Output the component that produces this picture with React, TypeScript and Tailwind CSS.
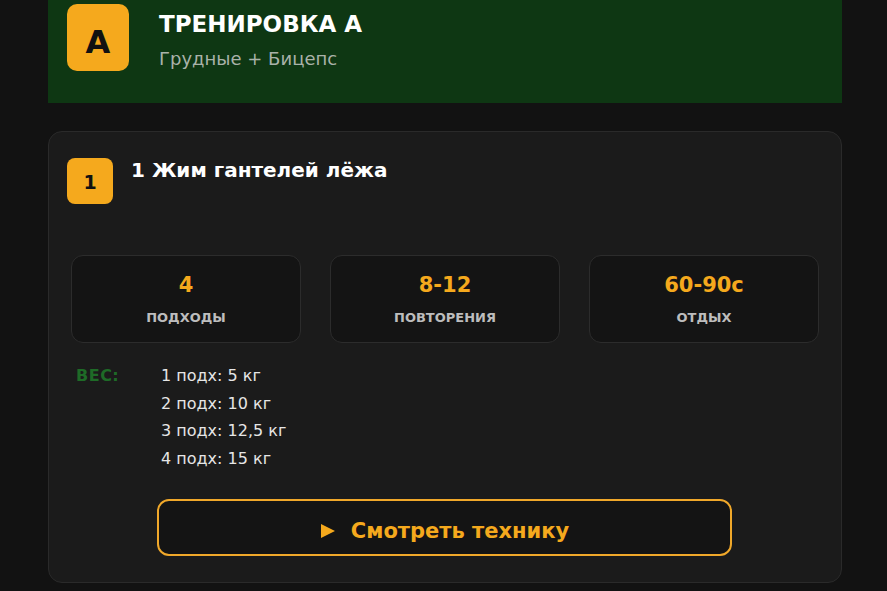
import React from "react";

const stats = [
  { value: "4", label: "ПОДХОДЫ" },
  { value: "8-12", label: "ПОВТОРЕНИЯ" },
  { value: "60-90с", label: "ОТДЫХ" },
];

const weights = ["1 подх: 5 кг", "2 подх: 10 кг", "3 подх: 12,5 кг", "4 подх: 15 кг"];

export default function App() {
  return (
    <div
      className="min-h-[591px] w-full bg-[#121212] pb-[20px]"
      style={{ fontFamily: '"DejaVu Sans", sans-serif' }}
    >
      <div className="ml-[48px] w-[794px]">
        <header className="flex h-[103px] items-start bg-[#0e3713] pl-[19px] pt-[4px]">
          <div className="flex h-[67px] w-[62px] items-center justify-center rounded-[10px] bg-[#f5a91d] pt-[8px] text-[32px] font-bold text-[#111]">
            A
          </div>
          <div className="ml-[30px] pt-[8px]">
            <h1 className="text-[23px] font-bold leading-[24px] text-white">ТРЕНИРОВКА А</h1>
            <p className="mt-[13px] text-[18px] leading-[20px] text-[#a9b2a9]">Грудные + Бицепс</p>
          </div>
        </header>

        <section className="mt-[28px] rounded-[14px] border border-[#2a2a2a] bg-[#1b1b1b] px-[22px] pb-[26px] pt-[26px]">
          <div className="flex items-start">
            <div className="-ml-[4px] flex h-[46px] w-[46px] items-center justify-center rounded-[8px] bg-[#f5a91d] pt-[2px] text-[19px] font-bold text-[#111]">
              1
            </div>
            <h2 className="ml-[18px] mt-[0px] text-[20px] font-bold leading-[24px] text-white">1 Жим гантелей лёжа</h2>
          </div>

          <div className="mt-[51px] grid grid-cols-3 gap-[29px]">
            {stats.map((s) => (
              <div
                key={s.label}
                className="flex h-[88px] flex-col items-center justify-center rounded-[12px] border border-[#2c2c2c] bg-[#141414]"
              >
                <div className="text-[21px] font-bold leading-[24px] text-[#f5a91d]">{s.value}</div>
                <div className="mt-[13px] text-[13px] font-bold leading-[16px] text-[#bdbdbd]">{s.label}</div>
              </div>
            ))}
          </div>

          <div className="mt-[22px] flex pl-[5px]">
            <div className="w-[85px] text-[16px] font-bold leading-[22px] tracking-[0.5px] text-[#1e6b27]">ВЕС:</div>
            <div className="flex flex-col gap-[5.5px]">
              {weights.map((w) => (
                <div key={w} className="text-[16px] leading-[22px] text-[#e6e6e6]">
                  {w}
                </div>
              ))}
            </div>
          </div>

          <div className="mt-[29px] flex pl-[86px] pr-[87px]">
            <button className="flex h-[57px] w-full items-center justify-center gap-[15px] rounded-[12px] border-2 border-[#f0a82a] bg-[#141414] pt-[8px] text-[#f5a91d]">
              <svg width="16" height="16" viewBox="0 0 16 16">
                <path d="M1 1 L15 8 L1 15 Z" fill="#f5a91d" />
              </svg>
              <span className="text-[21px] font-bold leading-[24px]">Смотреть технику</span>
            </button>
          </div>
        </section>
      </div>
    </div>
  );
}
